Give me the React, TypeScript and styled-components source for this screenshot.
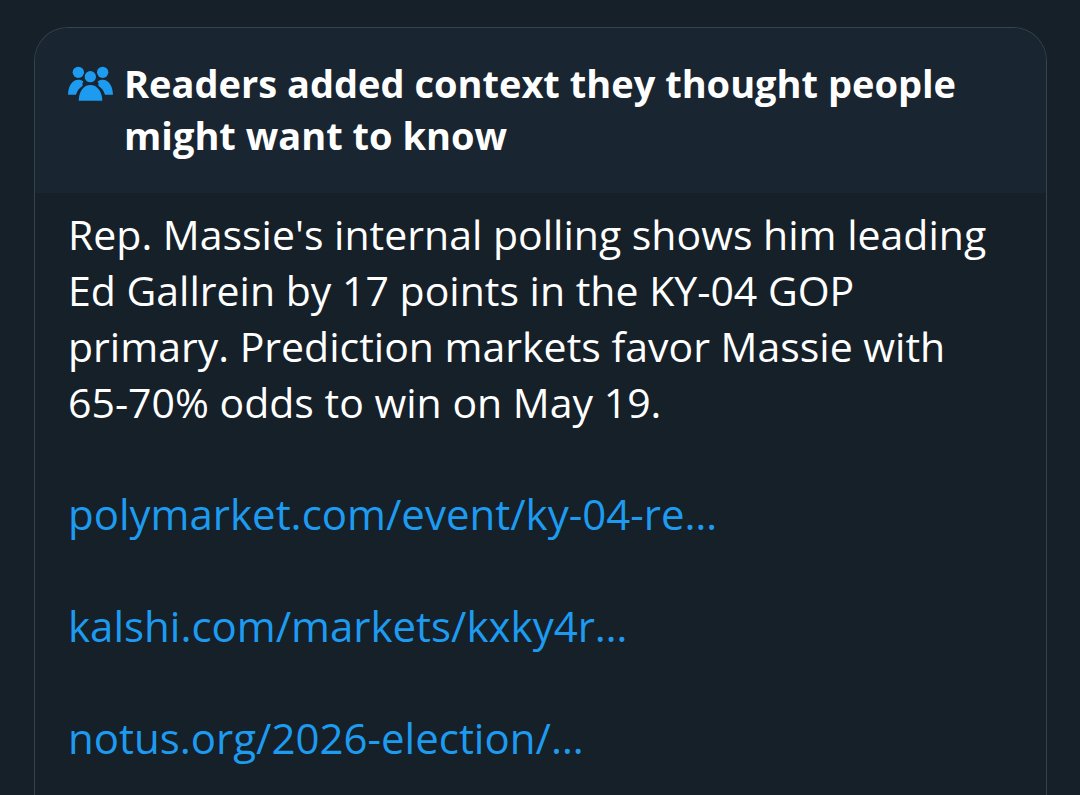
import React from 'react';
import styled, { createGlobalStyle } from 'styled-components';

const Global = createGlobalStyle`
  * { box-sizing: border-box; }
  body {
    margin: 0;
    background: #162029;
    color: #fff;
    font-family: "Open Sans", sans-serif;
  }
`;

const Page = styled.main`
  padding: 27px 33px 0 34px;
`;

const Card = styled.article`
  border: 1px solid #36424d;
  border-bottom: 0;
  border-radius: 34px 34px 0 0;
  overflow: hidden;
`;

const Header = styled.header`
  display: flex;
  gap: 11px;
  padding: 29px 33px 32px;
  background: #192530;
`;

const People = styled.svg`
  flex: none;
  width: 45px;
  height: 35px;
  margin-top: 9px;
  fill: #1d9bf0;
`;

const Title = styled.h1`
  margin: 0;
  font-size: 38px;
  line-height: 52px;
  font-weight: 680;
`;

const Body = styled.div`
  display: flex;
  flex-direction: column;
  align-items: flex-start;
  gap: 56px;
  padding: 13px 33px 29px;
  font-size: 41px;
  line-height: 56px;
`;

const Note = styled.p`
  margin: 0;
`;

const Source = styled.a`
  color: #1d9bf0;
  font-size: 42px;
  text-decoration: none;
`;

const sources = [
  { label: 'polymarket.com/event/ky-04-re…', href: '#polymarket' },
  { label: 'kalshi.com/markets/kxky4r…', href: '#kalshi' },
  { label: 'notus.org/2026-election/…', href: '#notus' },
];

function PeopleIcon() {
  return (
    <People viewBox="0 0 135 105" aria-hidden="true">
      <circle cx="31" cy="19" r="17" />
      <circle cx="104" cy="19" r="17" />
      <circle cx="67" cy="32" r="17" />
      <path d="M0 86C1 57 14 41 31 41c6 0 11 2 15 5-3 5-3 9-2 13C33 66 27 75 24 86Z" />
      <path d="M135 86c-1-29-14-45-31-45-6 0-11 2-15 5 3 5 3 9 2 13 11 7 17 16 20 27Z" />
      <path d="M32 104c1-29 15-47 35-47s35 18 36 47Z" />
    </People>
  );
}

export default function App() {
  return (
    <Page>
      <Global />
      <Card>
        <Header>
          <PeopleIcon />
          <Title>
            Readers added context they thought people
            <br />
            might want to know
          </Title>
        </Header>
        <Body>
          <Note>
            Rep. Massie's internal polling shows him leading
            <br />
            Ed Gallrein by 17 points in the KY-04 GOP
            <br />
            primary. Prediction markets favor Massie with
            <br />
            65-70% odds to win on May 19.
          </Note>
          {sources.map((s) => (
            <Source key={s.href} href={s.href}>
              {s.label}
            </Source>
          ))}
        </Body>
      </Card>
    </Page>
  );
}
